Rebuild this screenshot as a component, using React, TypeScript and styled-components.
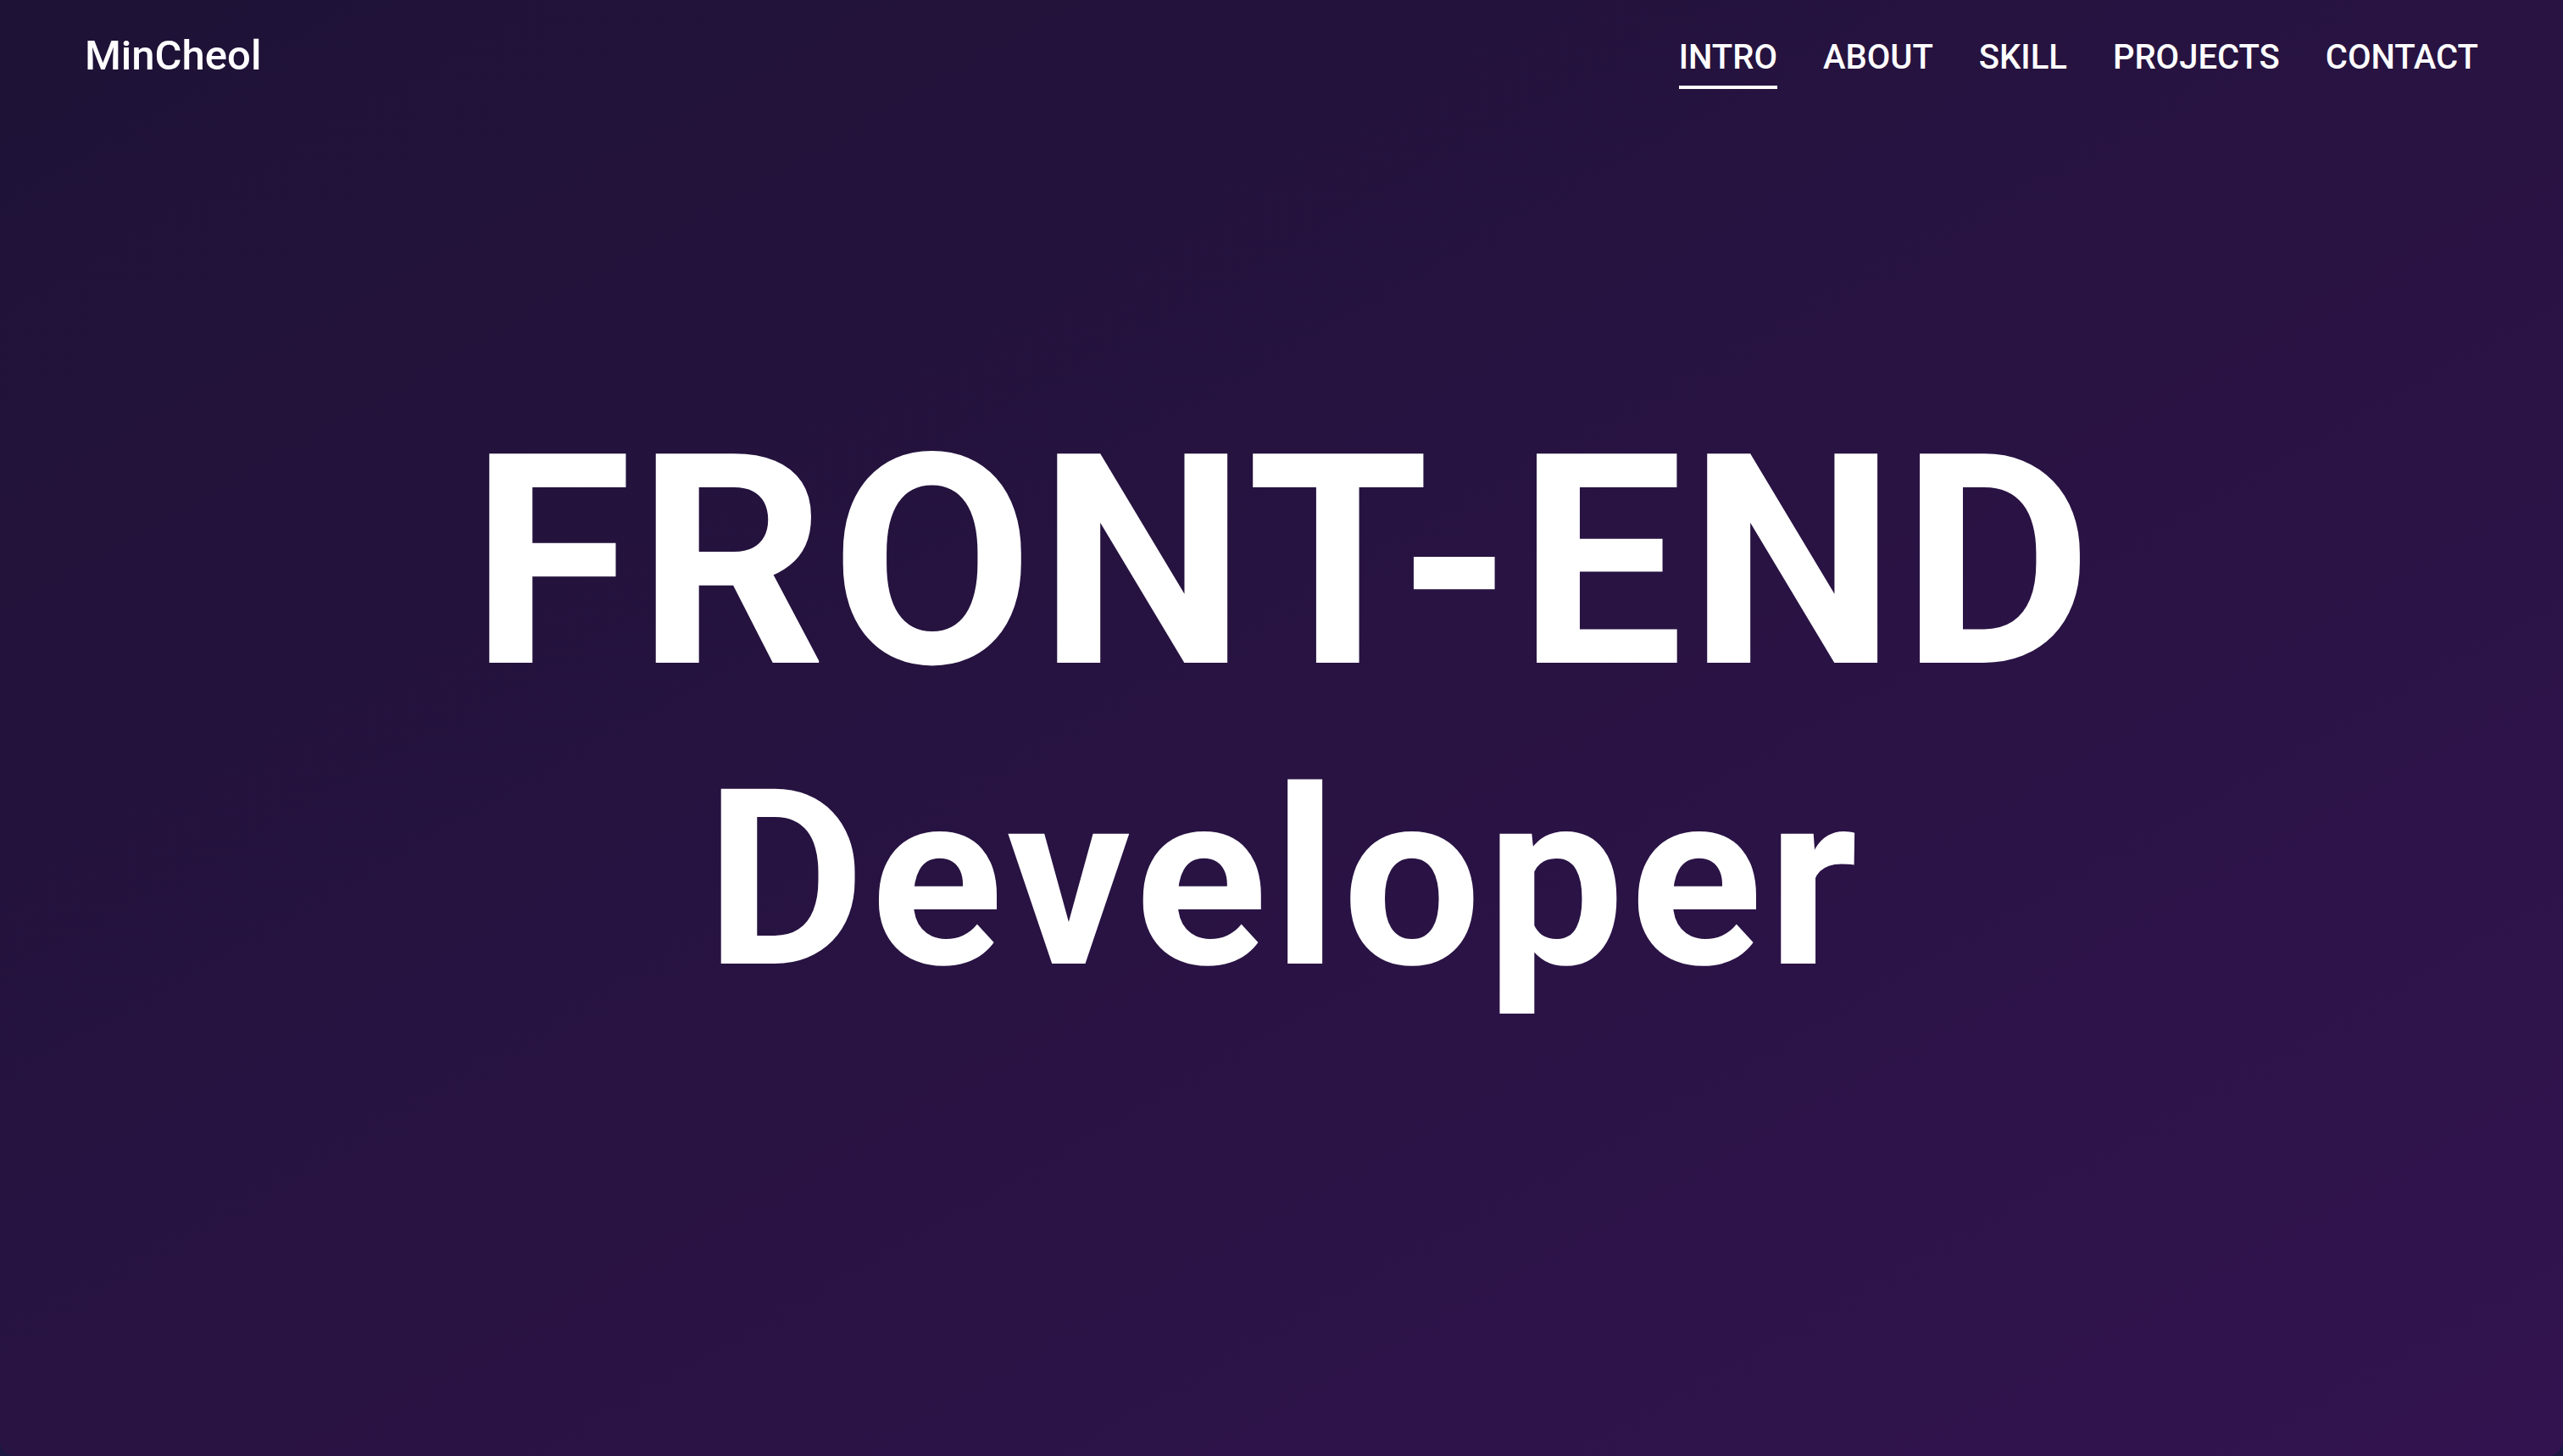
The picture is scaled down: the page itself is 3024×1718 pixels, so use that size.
import React from "react";
import styled, { createGlobalStyle } from "styled-components";

const Global = createGlobalStyle`
  html, body { margin: 0; padding: 0; }
  body {
    background: #1b1842;
    font-family: Roboto, "Noto Sans", sans-serif;
    -webkit-font-smoothing: antialiased;
  }
`;

const Hero = styled.section`
  height: 1718px;
  box-sizing: border-box;
  display: flex;
  flex-direction: column;
  background: linear-gradient(to bottom right, #1e1236 0%, #281342 50%, #32134f 100%);
  border-radius: 0 0 18px 18px;
  overflow: hidden;
  color: #fff;
`;

const Header = styled.header`
  display: flex;
  align-items: center;
  justify-content: space-between;
  padding: 0 100px;
  height: 132px;
`;

const Logo = styled.div`
  font-size: 49px;
  line-height: 56px;
  font-weight: 500;
`;

const Nav = styled.nav`
  display: flex;
  gap: 54px;
  padding-top: 2px;
`;

const NavItem = styled.a<{ $active?: boolean }>`
  position: relative;
  font-size: 40px;
  line-height: 47px;
  font-weight: 500;
  color: #fff;
  text-decoration: none;
  &::after {
    content: "";
    position: absolute;
    left: 0;
    right: 0;
    bottom: -14px;
    height: 4px;
    background: #fff;
    display: ${(p) => (p.$active ? "block" : "none")};
  }
`;

const Main = styled.main`
  flex: 1;
  display: flex;
  flex-direction: column;
  align-items: center;
  padding-top: 358px;
`;

const Title = styled.h1`
  margin: 0;
  padding-left: 6px;
  font-size: 347px;
  line-height: 347px;
  font-weight: 700;
  letter-spacing: 6px;
`;

const Sub = styled.h2`
  margin: 56px 0 0;
  padding-left: 6px;
  font-size: 290px;
  line-height: 290px;
  font-weight: 700;
  letter-spacing: 6px;
`;

export default function App() {
  const items = ["INTRO", "ABOUT", "SKILL", "PROJECTS", "CONTACT"];
  return (
    <>
      <Global />
      <Hero>
        <Header>
          <Logo>MinCheol</Logo>
          <Nav>
            {items.map((t, i) => (
              <NavItem key={t} href="#" $active={i === 0}>
                {t}
              </NavItem>
            ))}
          </Nav>
        </Header>
        <Main>
          <Title>FRONT-END</Title>
          <Sub>Developer</Sub>
        </Main>
      </Hero>
    </>
  );
}
